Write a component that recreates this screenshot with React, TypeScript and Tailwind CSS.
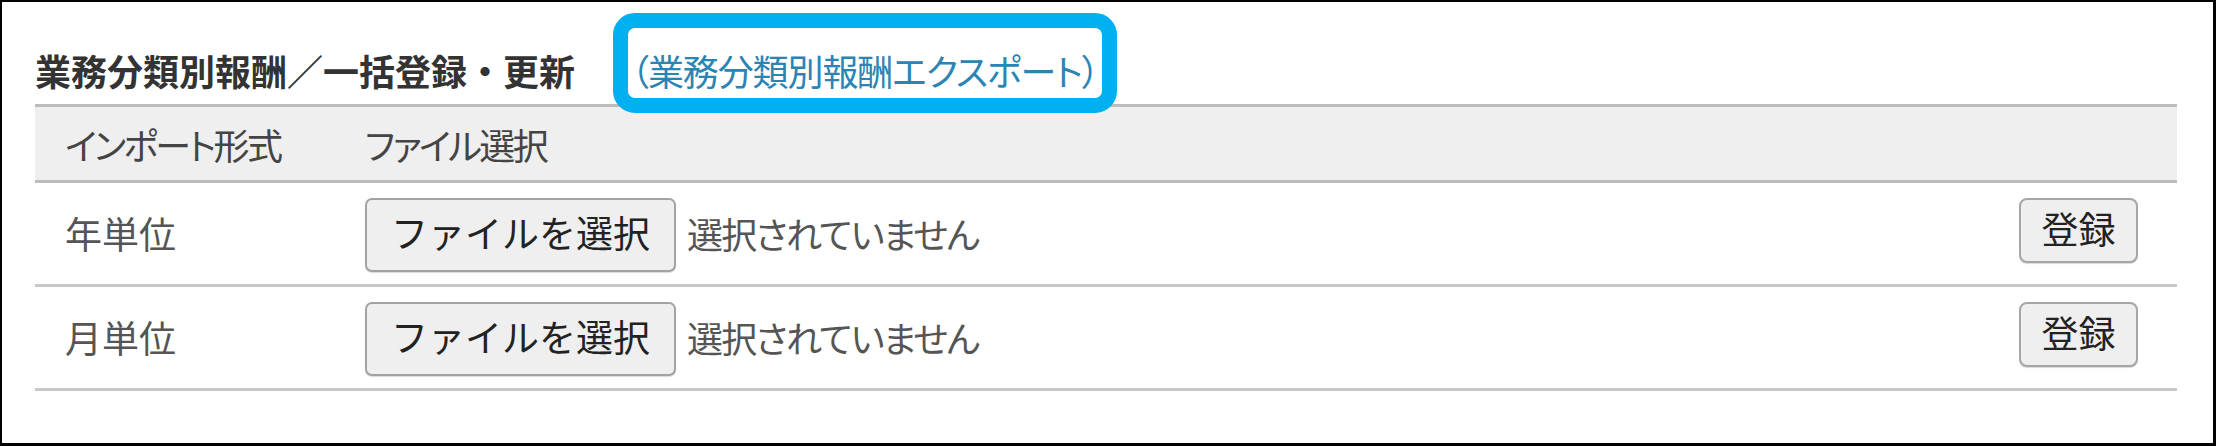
import React from "react";

const rows = ["年単位", "月単位"];

export default function App() {
  return (
    <div className="relative w-[2216px] h-[446px] bg-white border-black border-l-2 border-t-2 border-r-[3px] border-b-[3px] font-['Noto_Sans_CJK_JP','Noto_Sans',sans-serif] overflow-hidden">
      <div className="pl-[33px] pr-[36px]">
        {/* title row */}
        <div className="h-[102px] pt-[34px] flex items-center">
          <div className="flex items-center h-[54px] leading-[54px] whitespace-nowrap">
            <span className="text-[36px] font-bold text-[#333333]">
              業務分類別報酬／一括登録・更新
            </span>
            <span className="ml-[56px] text-[36px] text-[#2a84b4] [font-feature-settings:'palt'] tracking-[-1.1px]">
              （業務分類別報酬エクスポート）
            </span>
          </div>
        </div>

        {/* header */}
        <div className="grid grid-cols-[330px_1fr] h-[79px] bg-[#efefef] border-y-[3px] border-[#bdbdbd] items-center text-[36px] text-[#444444] [font-feature-settings:'palt'] tracking-[-2.6px] whitespace-nowrap">
          <div className="pl-[30px] leading-[48px]">インポート形式</div>
          <div className="leading-[48px]">ファイル選択</div>
        </div>

        {/* rows */}
        {rows.map((label) => (
          <div
            key={label}
            className="grid grid-cols-[330px_1fr] h-[104px] border-b-[3px] border-[#c8c8c8]"
          >
            <div className="pl-[30px] flex items-center text-[37px] text-[#555555] leading-[48px] pb-[2px]">
              {label}
            </div>
            <div className="flex items-start pt-[15px]">
              <button className="h-[74px] w-[311px] bg-[#efefef] border-2 border-[#a3a3a3] rounded-[7px] text-[37px] leading-[48px] text-[#222222] pb-[6px] shadow-[0_1px_1px_rgba(0,0,0,0.15)] whitespace-nowrap">
                ファイルを選択
              </button>
              <div className="ml-[11px] h-[74px] flex items-center pb-[4px] text-[36px] leading-[48px] text-[#555555] [font-feature-settings:'palt'] tracking-[-1.7px] whitespace-nowrap">
                選択されていません
              </div>
              <button className="ml-auto mr-[39px] h-[65px] w-[119px] bg-[#efefef] border-2 border-[#a6a6a6] rounded-[8px] text-[37px] leading-[48px] text-[#222222] pb-[6px] shadow-[0_1px_1px_rgba(0,0,0,0.15)]">
                登録
              </button>
            </div>
          </div>
        ))}
      </div>

      {/* highlight annotation */}
      <div className="absolute left-[611px] top-[11px] w-[504px] h-[100px] border-[15px] border-[#00b0f0] rounded-[22px] pointer-events-none" />
    </div>
  );
}
